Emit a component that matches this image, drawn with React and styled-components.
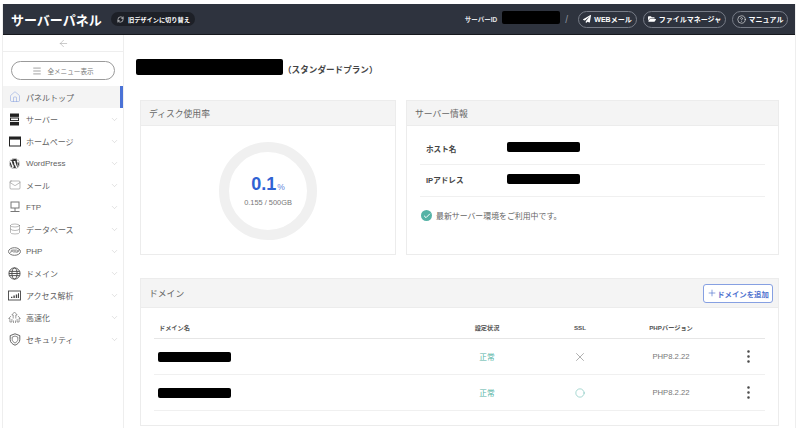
import React from "react";
import styled, { createGlobalStyle } from "styled-components";
import {
  ArrowLeft,
  Menu,
  House,
  ChevronDown,
  Mail,
  Database,
  RefreshCw,
  Plus,
  X,
  Circle,
  EllipsisVertical,
  CircleHelp,
  Check,
} from "lucide-react";
import { FaWordpress, FaPaperPlane, FaFolderOpen } from "react-icons/fa";

const GlobalStyle = createGlobalStyle`
  html, body { margin: 0; padding: 0; background: #fff; }
  body {
    font-family: "Liberation Sans", "Noto Sans CJK JP", sans-serif;
    color: #555;
    overflow: hidden;
  }
  * { box-sizing: border-box; }
`;

const Frame = styled.div`
  width: 794px;
  height: 424px;
  margin: 4px 0 0 2px;
  border-left: 1px solid #eeeeee;
  border-right: 1px solid #eeeeee;
  display: flex;
  flex-direction: column;
  overflow: hidden;
`;

const Header = styled.header`
  height: 31px;
  margin: 0 -1px;
  flex: none;
  background: #2e333e;
  border-bottom: 1px solid #16181d;
  display: flex;
  align-items: center;
  padding: 0 8px 0 9px;
  color: #fff;
`;

const Logo = styled.div`
  font-size: 13px;
  font-weight: 700;
  letter-spacing: 0;
  width: 100px;
`;

const OldDesign = styled.div`
  height: 14px;
  width: 84px;
  border-radius: 7px;
  background: #1d2027;
  display: flex;
  align-items: center;
  gap: 4px;
  padding-left: 6px;
  font-size: 6.2px;
  font-weight: 700;
  white-space: nowrap;
`;

const HeaderRight = styled.div`
  margin-left: auto;
  display: flex;
  align-items: center;
`;

const ServerId = styled.span`
  font-size: 6.5px;
  font-weight: 700;
  color: #e4e6ea;
  margin-right: 5px;
`;

const Slash = styled.span`
  font-size: 10px;
  color: #8b909b;
  margin: 0 10px 0 5px;
`;

const Pill = styled.a`
  height: 17px;
  width: ${(p) => p.$w}px;
  margin-left: ${(p) => p.$ml || 0}px;
  border: 1px solid #777c87;
  border-radius: 9px;
  display: flex;
  align-items: center;
  justify-content: center;
  gap: 3px;
  font-size: 7px;
  font-weight: 700;
  color: #fff;
  white-space: nowrap;
`;

const Body = styled.div`
  flex: 1;
  display: flex;
  min-height: 0;
`;

const Sidebar = styled.aside`
  width: 121px;
  flex: none;
  border-right: 1px solid #eeeeee;
`;

const Collapse = styled.div`
  height: 17px;
  border-bottom: 1px solid #eeeeee;
  display: flex;
  align-items: center;
  justify-content: center;
  color: #8f8f8f;
`;

const AllMenu = styled.button`
  display: flex;
  align-items: center;
  justify-content: center;
  gap: 5px;
  width: 104px;
  height: 19px;
  margin: 9px 0 6px 8px;
  background: #fff;
  border: 1px solid #9a9a9a;
  border-radius: 10px;
  font: inherit;
  font-size: 6.6px;
  color: #777;
`;

const NavItem = styled.div`
  height: 22px;
  display: flex;
  align-items: center;
  padding: 0 4px 0 5px;
  font-size: 8px;
  color: #5f5f5f;
  background: ${(p) => (p.$active ? "#f4f4f4" : "transparent")};
  border-right: ${(p) => (p.$active ? "3px solid #4a72d6" : "none")};
`;

const NavIcon = styled.span`
  width: 13px;
  height: 13px;
  margin-right: 5px;
  display: flex;
  align-items: center;
  justify-content: center;
  color: ${(p) => p.$color || "#777"};
`;

const NavLabel = styled.span`
  flex: 1;
  white-space: nowrap;
`;

const Main = styled.main`
  flex: 1;
  padding: 0 16px 0 16px;
  min-width: 0;
`;

const TitleRow = styled.div`
  height: 65px;
  display: flex;
  align-items: center;
  margin-left: -4px;
  padding-top: 2px;
  font-size: 8.6px;
  font-weight: 700;
  color: #444;
`;

const Redacted = styled.span`
  display: block;
  flex: none;
  width: ${(p) => p.$w}px;
  height: ${(p) => p.$h}px;
  margin-top: ${(p) => p.$mt || 0}px;
  background: #000;
  border-radius: 2px;
  filter: blur(0.5px);
`;

const CardRow = styled.div`
  display: flex;
  gap: 10px;
  margin-bottom: 23px;
`;

const Card = styled.section`
  flex: ${(p) => (p.$w ? "none" : 1)};
  width: ${(p) => (p.$w ? `${p.$w}px` : "auto")};
  height: ${(p) => p.$h}px;
  border: 1px solid #ececec;
  display: flex;
  flex-direction: column;
`;

const CardHead = styled.div`
  height: ${(p) => p.$h}px;
  flex: none;
  background: #f4f4f4;
  border-bottom: 1px solid #ececec;
  display: flex;
  align-items: center;
  justify-content: space-between;
  padding: 0 5px 0 8px;
  font-size: 8.8px;
  color: #666;
`;

const DonutWrap = styled.div`
  flex: 1;
  display: flex;
  align-items: center;
  justify-content: center;
  padding-top: 1px;
`;

const Donut = styled.div`
  width: 98px;
  height: 98px;
  border: 10px solid #f0f0f0;
  border-radius: 50%;
  display: flex;
  flex-direction: column;
  align-items: center;
  justify-content: center;
`;

const Percent = styled.div`
  color: #2f62d3;
  font-size: 18px;
  font-weight: 700;
  line-height: 20px;

  small {
    font-size: 8.5px;
    font-weight: 400;
    margin-left: 1px;
    color: #5f83dc;
  }
`;

const Usage = styled.div`
  font-size: 7.4px;
  color: #777;
  line-height: 11px;
`;

const InfoBody = styled.div`
  padding: 8px 13px 0 13px;
`;

const InfoRow = styled.div`
  height: ${(p) => p.$h}px;
  display: flex;
  align-items: center;
  border-bottom: 1px solid #f0f0f0;
  padding: 0 0 2px 6px;
  font-size: 7.6px;
  font-weight: 700;
  color: #444;
`;

const InfoLabel = styled.span`
  width: 81px;
`;

const Notice = styled.div`
  display: flex;
  align-items: center;
  gap: 4px;
  margin-top: 13px;
  font-size: 7.9px;
  color: #666;
`;

const CheckBadge = styled.span`
  width: 11px;
  height: 11px;
  margin-left: 1px;
  border-radius: 50%;
  background: #55b3a6;
  color: #fff;
  display: flex;
  align-items: center;
  justify-content: center;
`;

const AddButton = styled.button`
  width: 70px;
  height: 19px;
  background: #fff;
  border: 1px solid #86a0e2;
  border-radius: 3px;
  display: flex;
  align-items: center;
  justify-content: center;
  gap: 0;
  padding: 0;
  font: inherit;
  font-size: 7.4px;
  font-weight: 700;
  color: #4f72cf;
  white-space: nowrap;
`;

const Table = styled.div`
  padding: 0 13px;
`;

const GridRow = styled.div`
  display: grid;
  grid-template-columns: 287px 92px 94px 88px 50px;
  align-items: center;
  height: ${(p) => p.$h}px;
  padding-top: ${(p) => (p.$head ? "8px" : 0)};
  border-bottom: 1px solid ${(p) => (p.$head ? "#e6e6e6" : "#f0f0f0")};
  font-size: ${(p) => (p.$head ? "6.2px" : "7.7px")};
  font-weight: ${(p) => (p.$head ? 700 : 400)};
  color: ${(p) => (p.$head ? "#555" : "#777")};
`;

const NameCell = styled.div`
  padding-left: ${(p) => p.$pl}px;
`;

const Cell = styled.div`
  display: flex;
  justify-content: center;
  color: ${(p) => p.$color || "inherit"};
`;

const MenuCell = styled.div`
  display: flex;
  justify-content: center;
  padding-left: 16px;
  color: #444;
`;

const stroke = { fill: "none", stroke: "currentColor", strokeWidth: 1 };

const ServerIcon = () => (
  <svg width="11" height="13" viewBox="0 0 11 13">
    <rect x="1" y="0.5" width="9" height="3.4" fill="#222" />
    <rect x="1.5" y="5" width="8" height="2.6" fill="#fff" stroke="#222" />
    <rect x="1" y="9" width="9" height="3.5" fill="#222" />
  </svg>
);

const WindowIcon = () => (
  <svg width="12" height="11" viewBox="0 0 12 11">
    <rect x="0.5" y="1" width="11" height="9" fill="#fff" stroke="#222" />
    <rect x="0.5" y="1" width="11" height="2.6" fill="#222" />
  </svg>
);

const MonitorIcon = () => (
  <svg width="12" height="12" viewBox="0 0 12 12" {...stroke}>
    <rect x="2" y="1" width="8" height="6" />
    <path d="M6 7v3M1.5 10.5h9" />
  </svg>
);

const PhpIcon = () => (
  <svg width="13" height="9" viewBox="0 0 13 9" {...stroke}>
    <ellipse cx="6.5" cy="4.5" rx="6" ry="3.8" />
    <path d="M2.5 6l1-3h1.4v1.4H3.2M6 2v4M6 4h2M8 2v4M9 6l.8-3h1.2v1.4H9.6" strokeWidth="0.7" />
  </svg>
);

const GlobeIcon = () => (
  <svg width="13" height="13" viewBox="0 0 13 13" fill="none" stroke="#444" strokeWidth="0.9">
    <circle cx="6.5" cy="6.5" r="5.6" />
    <ellipse cx="6.5" cy="6.5" rx="2.6" ry="5.6" />
    <path d="M1.3 4.4h10.4M1 6.5h11M1.3 8.6h10.4" />
  </svg>
);

const ChartIcon = () => (
  <svg width="13" height="11" viewBox="0 0 13 11">
    <rect x="0.5" y="1" width="12" height="9" fill="none" stroke="#444" strokeWidth="0.9" />
    <path d="M3 8h1.4V6.8H3zM5.4 8h1.4V5.6H5.4zM7.8 8h1.4V4.6H7.8zM10 8h1V3.2h-1z" fill="#444" />
  </svg>
);

const SpeedIcon = () => (
  <svg width="13" height="13" viewBox="0 0 13 13" fill="none" stroke="#777" strokeWidth="0.7">
    <path d="M6.5 1L3.8 4h1.4v3.5M6.5 1l2.7 3H7.8v3.5" />
    <path d="M3 5L.7 7.5h1.2V11h2V8M10 5l2.3 2.5h-1.2V11h-2V8M5.5 9.5v2.5M7.5 9.5v2.5" />
  </svg>
);

const ShieldIcon = () => (
  <svg width="12" height="13" viewBox="0 0 12 13" fill="none" stroke="#555" strokeWidth="0.9">
    <path d="M6 .8l4.8 1.8v4c0 2.8-2.2 4.6-4.8 5.6C3.400 11.200 1.200 9.400 1.200 6.600v-4z" />
    <path d="M6 3l2.800 1.100v2.400C8.800 8.200 7.500 9.300 6 10 4.500 9.300 3.200 8.200 3.200 6.500V4.100z" strokeWidth="0.7" />
  </svg>
);

const MENU = [
  { label: "サーバー", icon: <ServerIcon /> },
  { label: "ホームページ", icon: <WindowIcon /> },
  { label: "WordPress", icon: <FaWordpress size={11} color="#333" /> },
  { label: "メール", icon: <Mail size={12} strokeWidth={1} /> },
  { label: "FTP", icon: <MonitorIcon /> },
  { label: "データベース", icon: <Database size={12} strokeWidth={1} /> },
  { label: "PHP", icon: <PhpIcon /> },
  { label: "ドメイン", icon: <GlobeIcon /> },
  { label: "アクセス解析", icon: <ChartIcon /> },
  { label: "高速化", icon: <SpeedIcon /> },
  { label: "セキュリティ", icon: <ShieldIcon /> },
];

const DOMAINS = [
  { id: 1, ssl: <X size={14} strokeWidth={1} color="#777" /> },
  { id: 2, ssl: <Circle size={10} strokeWidth={1.2} color="#55b3a6" /> },
];

export default function App() {
  return (
    <>
      <GlobalStyle />
      <Frame>
        <Header>
          <Logo>サーバーパネル</Logo>
          <OldDesign>
            <RefreshCw size={7} strokeWidth={2} />
            旧デザインに切り替え
          </OldDesign>
          <HeaderRight>
            <ServerId>サーバーID</ServerId>
            <Redacted $w={58} $h={13} $mt={-3} />
            <Slash>/</Slash>
            <Pill $w={59}>
              <FaPaperPlane size={8} />
              WEBメール
            </Pill>
            <Pill $w={83} $ml={6}>
              <FaFolderOpen size={8} />
              ファイルマネージャ
            </Pill>
            <Pill $w={56} $ml={6}>
              <CircleHelp size={9} strokeWidth={1.5} />
              マニュアル
            </Pill>
          </HeaderRight>
        </Header>
        <Body>
          <Sidebar>
            <Collapse>
              <ArrowLeft size={11} strokeWidth={1} />
            </Collapse>
            <AllMenu>
              <Menu size={10} strokeWidth={1.2} color="#444" />
              全メニュー表示
            </AllMenu>
            <NavItem $active>
              <NavIcon $color="#7e9ade">
                <House size={12} strokeWidth={1} />
              </NavIcon>
              <NavLabel>パネルトップ</NavLabel>
            </NavItem>
            {MENU.map((item) => (
              <NavItem key={item.label}>
                <NavIcon>{item.icon}</NavIcon>
                <NavLabel>{item.label}</NavLabel>
                <ChevronDown size={9} strokeWidth={1} color="#b0b0b0" />
              </NavItem>
            ))}
          </Sidebar>
          <Main>
            <TitleRow>
              <Redacted $w={147} $h={16} $mt={-3} />
              （スタンダードプラン）
            </TitleRow>
            <CardRow>
              <Card $w={256} $h={155}>
                <CardHead $h={25}>ディスク使用率</CardHead>
                <DonutWrap>
                  <Donut>
                    <Percent>
                      0.1<small>%</small>
                    </Percent>
                    <Usage>0.155 / 500GB</Usage>
                  </Donut>
                </DonutWrap>
              </Card>
              <Card $h={155}>
                <CardHead $h={25}>サーバー情報</CardHead>
                <InfoBody>
                  <InfoRow $h={31}>
                    <InfoLabel>ホスト名</InfoLabel>
                    <Redacted $w={73} $h={10} $mt={-2} />
                  </InfoRow>
                  <InfoRow $h={32}>
                    <InfoLabel>IPアドレス</InfoLabel>
                    <Redacted $w={73} $h={10} $mt={-1} />
                  </InfoRow>
                  <Notice>
                    <CheckBadge>
                      <Check size={8} strokeWidth={3} />
                    </CheckBadge>
                    最新サーバー環境をご利用中です。
                  </Notice>
                </InfoBody>
              </Card>
            </CardRow>
            <Card $h={148}>
              <CardHead $h={29}>
                ドメイン
                <AddButton>
                  <Plus size={10} strokeWidth={1.6} />
                  ドメインを追加
                </AddButton>
              </CardHead>
              <Table>
                <GridRow $head $h={31}>
                  <NameCell $pl={5}>ドメイン名</NameCell>
                  <Cell>設定状況</Cell>
                  <Cell>SSL</Cell>
                  <Cell>PHPバージョン</Cell>
                  <MenuCell />
                </GridRow>
                {DOMAINS.map((d) => (
                  <GridRow key={d.id} $h={36}>
                    <NameCell $pl={4}>
                      <Redacted $w={73} $h={10} />
                    </NameCell>
                    <Cell $color="#55b3a6">正常</Cell>
                    <Cell>{d.ssl}</Cell>
                    <Cell>PHP8.2.22</Cell>
                    <MenuCell>
                      <EllipsisVertical size={17} strokeWidth={1.6} />
                    </MenuCell>
                  </GridRow>
                ))}
              </Table>
            </Card>
          </Main>
        </Body>
      </Frame>
    </>
  );
}
